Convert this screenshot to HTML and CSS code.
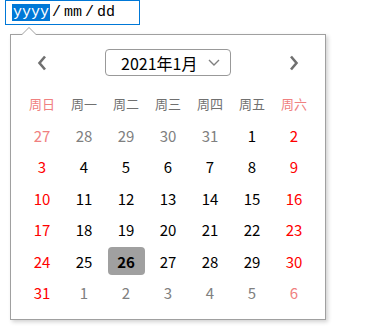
FILE: index.html
```html
<html>
    <head>
        <title>日期选择</title>
        <link rel="stylesheet" href="styles.css">
    </head>
    <body>
        <div class="page">
            <div class="date-input">
                <span class="seg active">yyyy</span>
                <span class="sep">/</span>
                <span class="seg">mm</span>
                <span class="sep">/</span>
                <span class="seg">dd</span>
            </div>

            <div class="picker">
                <div class="picker-head">
                    <button class="nav">
                        <svg width="10" height="16" viewBox="0 0 10 16"><path d="M8 1.5 L2.5 8 L8 14.5" fill="none" stroke="#707070" stroke-width="2.6"/></svg>
                    </button>
                    <div class="month-select">
                        <span>2021年1月</span>
                        <svg width="12" height="8" viewBox="0 0 12 8"><path d="M1 1 L6 6 L11 1" fill="none" stroke="#808080" stroke-width="1.4"/></svg>
                    </div>
                    <button class="nav">
                        <svg width="10" height="16" viewBox="0 0 10 16"><path d="M2 1.5 L7.5 8 L2 14.5" fill="none" stroke="#707070" stroke-width="2.6"/></svg>
                    </button>
                </div>

                <div class="days">
                    <!-- weekdays -->
                    <span class="wk weekend">周日</span>
                    <span class="wk">周一</span>
                    <span class="wk">周二</span>
                    <span class="wk">周三</span>
                    <span class="wk">周四</span>
                    <span class="wk">周五</span>
                    <span class="wk weekend">周六</span>

                    <!-- row 1 -->
                    <span class="day other weekend">27</span>
                    <span class="day other">28</span>
                    <span class="day other">29</span>
                    <span class="day other">30</span>
                    <span class="day other">31</span>
                    <span class="day">1</span>
                    <span class="day red">2</span>

                    <!-- row 2 -->
                    <span class="day red">3</span>
                    <span class="day">4</span>
                    <span class="day">5</span>
                    <span class="day">6</span>
                    <span class="day">7</span>
                    <span class="day">8</span>
                    <span class="day red">9</span>

                    <!-- row 3 -->
                    <span class="day red">10</span>
                    <span class="day">11</span>
                    <span class="day">12</span>
                    <span class="day">13</span>
                    <span class="day">14</span>
                    <span class="day">15</span>
                    <span class="day red">16</span>

                    <!-- row 4 -->
                    <span class="day red">17</span>
                    <span class="day">18</span>
                    <span class="day">19</span>
                    <span class="day">20</span>
                    <span class="day">21</span>
                    <span class="day">22</span>
                    <span class="day red">23</span>

                    <!-- row 5 -->
                    <span class="day red">24</span>
                    <span class="day">25</span>
                    <span class="day selected"><b>26</b></span>
                    <span class="day">27</span>
                    <span class="day">28</span>
                    <span class="day">29</span>
                    <span class="day red">30</span>

                    <!-- row 6 -->
                    <span class="day red">31</span>
                    <span class="day other">1</span>
                    <span class="day other">2</span>
                    <span class="day other">3</span>
                    <span class="day other">4</span>
                    <span class="day other">5</span>
                    <span class="day other weekend">6</span>
                </div>
            </div>
        </div>
    </body>
</html>
```

FILE: styles.css
```css
* {
    margin: 0;
    padding: 0;
    box-sizing: border-box;
}

body {
    font-family: "Noto Sans CJK SC", "Noto Sans", sans-serif;
    background-color: white;
}

.page {
    padding-left: 5px;
}

/* input */
.date-input {
    width: 135px;
    height: 25px;
    border: 1px solid #0078d7;
    display: flex;
    align-items: center;
    padding-left: 6px;
    font-family: "Liberation Mono", monospace;
    font-size: 15px;
    color: #000;
}

.seg {
    padding: 0 1px;
    line-height: 17px;
}

.seg.active {
    background-color: #0078d7;
    color: white;
}

.sep {
    margin: 0 2px;
    line-height: 17px;
}

/* popup */
.picker {
    position: relative;
    margin: 9px 0 0 5px;
    width: 316px;
    height: 286px;
    border: 1px solid #a0a0a0;
    background-color: white;
    box-shadow: 2px 2px 4px rgba(0, 0, 0, 0.18);
    padding: 14px 10px 0 10px;
}

.picker::before,
.picker::after {
    content: "";
    position: absolute;
    left: 10px;
    border: 8px solid transparent;
    border-top: 0;
}

.picker::before {
    top: -8px;
    border-bottom: 8px solid #a0a0a0;
}

.picker::after {
    top: -7px;
    border-bottom: 8px solid white;
}

.picker-head {
    display: flex;
    align-items: center;
    justify-content: space-between;
    height: 27px;
}

.nav {
    width: 42px;
    height: 27px;
    border: none;
    background: none;
    display: flex;
    align-items: center;
    justify-content: center;
}

.month-select {
    width: 126px;
    height: 27px;
    border: 1px solid #999;
    border-radius: 4px;
    display: flex;
    align-items: center;
    justify-content: space-between;
    padding: 0 10px 0 15px;
    font-size: 16px;
    color: #000;
}

.days {
    margin-top: 12px;
    display: grid;
    grid-template-columns: repeat(7, 42px);
    grid-auto-rows: 31.5px;
}

.wk,
.day {
    display: flex;
    align-items: center;
    justify-content: center;
}

.wk {
    font-size: 13px;
    color: #707070;
}

.wk.weekend {
    color: #f08080;
}

.day {
    font-size: 15px;
    color: #000;
}

.day.red {
    color: #ff0000;
}

.day.other {
    color: #808080;
}

.day.other.weekend {
    color: #f08080;
}

.day.selected b {
    width: 37px;
    height: 28px;
    border-radius: 4px;
    background-color: #a0a0a0;
    display: flex;
    align-items: center;
    justify-content: center;
}
```
